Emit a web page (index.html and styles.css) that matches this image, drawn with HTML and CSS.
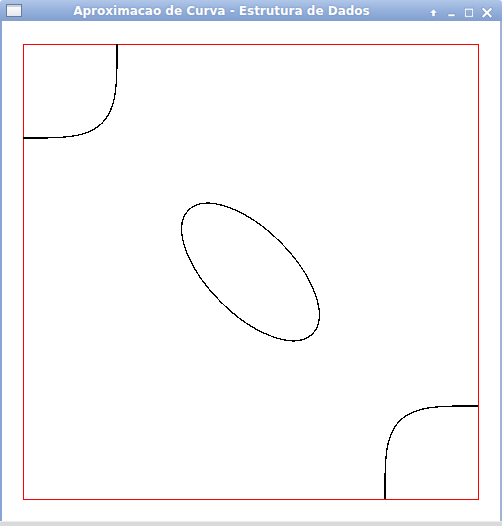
FILE: index.html
```html
<!DOCTYPE html>
<html>
<head>
<meta charset="utf-8">
<title>Aproximacao de Curva - Estrutura de Dados</title>
<link rel="stylesheet" href="styles.css">
</head>
<body>
<div class="window">
  <div class="titlebar">
    <div class="app-icon"><div class="app-icon-bar"></div></div>
    <div class="title">Aproximacao de Curva - Estrutura de Dados</div>
    <div class="buttons">
      <svg class="btn" width="12" height="21" viewBox="0 0 12 21">
        <path d="M6.5 9 L10.6 13.1 L8.1 13.1 L8.1 16.6 L4.9 16.6 L4.9 13.1 L2.4 13.1 Z" fill="#fff" stroke="#6684b4" stroke-width="0.5" stroke-linejoin="round"/>
      </svg>
      <svg class="btn" width="12" height="21" viewBox="0 0 12 21">
        <rect x="3" y="14" width="7" height="2.6" fill="#fff" stroke="#6684b4" stroke-width="0.5"/>
      </svg>
      <svg class="btn" width="12" height="21" viewBox="0 0 12 21">
        <path d="M1.5 8.2 H10.5 V17.2 H1.5 Z M3.2 10.2 V15.5 H8.8 V10.2 Z" fill="#fff" fill-rule="evenodd" stroke="#6684b4" stroke-width="0.5"/>
      </svg>
      <svg class="btn" width="12" height="21" viewBox="0 0 12 21">
        <path d="M2.4 9.1 L9.6 16.3 M9.6 9.1 L2.4 16.3" stroke="#6684b4" stroke-width="3.2" stroke-linecap="square"/>
        <path d="M2.4 9.1 L9.6 16.3 M9.6 9.1 L2.4 16.3" stroke="#fff" stroke-width="2.2" stroke-linecap="square"/>
      </svg>
    </div>
  </div>
  <div class="client">
    <svg class="canvas" width="498" height="500" viewBox="2 21 498 500">
      <rect class="frame" x="23.5" y="44.5" width="455" height="455"/>
      <polyline class="curve" points="117,44 116.94,65.51 116.74,74.39 116.28,83.17 115.39,91.82 114.12,98.97 112.49,105.11 110.48,110.47 108.08,115.19 105.27,119.36 102.04,123.04 98.36,126.27 94.19,129.08 89.47,131.48 84.11,133.49 77.97,135.12 70.82,136.39 62.17,137.28 53.39,137.74 44.51,137.94 23,138"/>
      <ellipse class="curve" cx="250.5" cy="272" rx="87.6" ry="42.2" transform="rotate(45 250.5 272)"/>
      <polyline class="curve" points="385,499 385.06,477.72 385.25,468.93 385.71,460.25 386.6,451.69 387.85,444.61 389.46,438.54 391.45,433.24 393.83,428.57 396.6,424.44 399.8,420.8 403.44,417.6 407.57,414.83 412.24,412.45 417.54,410.46 423.61,408.85 430.69,407.6 439.25,406.71 447.93,406.25 456.72,406.06 478,406"/>
    </svg>
  </div>
  <div class="frame-bottom"></div>
</div>
</body>
</html>
```
FILE: styles.css
```css
html, body {
  margin: 0;
  padding: 0;
  background: #ffffff;
}

.window {
  width: 502px;
  height: 526px;
  display: flex;
  flex-direction: column;
  overflow: hidden;
}

.titlebar {
  height: 21px;
  flex: 0 0 21px;
  display: flex;
  align-items: center;
  background: linear-gradient(to bottom, #b1c7e8 0%, #97b2dd 45%, #829fcf 100%);
  border-radius: 3px 3px 0 0;
}

.app-icon {
  width: 14px;
  height: 11px;
  margin-left: 6px;
  border: 1px solid #6a7c98;
  background: linear-gradient(to bottom, #ffffff, #e4e8ee);
  display: flex;
  flex-direction: column;
}

.app-icon-bar {
  height: 2px;
  background: #c9d2de;
}

.title {
  flex: 1;
  text-align: center;
  padding-right: 6px;
  font-family: "DejaVu Sans", sans-serif;
  font-weight: bold;
  font-size: 12px;
  color: #ffffff;
  text-shadow: 0 0 2px rgba(70, 100, 150, 0.6);
  white-space: nowrap;
}

.buttons {
  display: flex;
  align-self: stretch;
  gap: 6px;
  margin-right: 9px;
}

.btn {
  display: block;
}

.client {
  flex: 1;
  display: flex;
  background: #ffffff;
  border-left: 2px solid #87a6d5;
  border-right: 2px solid #9fb3d2;
}

.canvas {
  display: block;
}

.frame {
  fill: none;
  stroke: #ff0000;
  stroke-width: 1;
  shape-rendering: crispEdges;
}

.curve {
  fill: none;
  stroke: #000000;
  stroke-width: 1.3;
  shape-rendering: crispEdges;
}

.frame-bottom {
  flex: 0 0 5px;
  box-sizing: border-box;
  background: #dadada;
  border-top: 1px solid #ebebeb;
}
```
